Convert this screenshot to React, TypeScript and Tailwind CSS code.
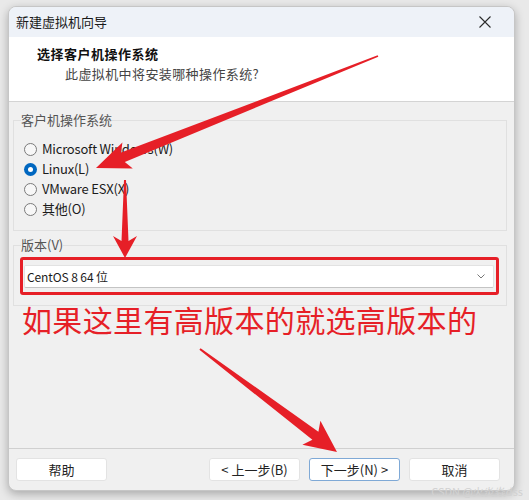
import React from 'react';

type Pt = [number, number];

// builds a tapered arrow polygon from tail to tip
function arrowPoints(s: Pt, t: Pt, headLen: number, headHalf: number, shaftEnd: number, shaftStart: number) {
  const dx = t[0] - s[0];
  const dy = t[1] - s[1];
  const len = Math.hypot(dx, dy);
  const ux = dx / len;
  const uy = dy / len;
  const px = -uy;
  const py = ux;
  const bx = t[0] - ux * headLen;
  const by = t[1] - uy * headLen;
  const jx = bx + ux * 5;
  const jy = by + uy * 5;
  const pts: Pt[] = [
    t,
    [bx + px * headHalf, by + py * headHalf],
    [jx + px * shaftEnd, jy + py * shaftEnd],
    [s[0] + px * shaftStart, s[1] + py * shaftStart],
    [s[0] - px * shaftStart, s[1] - py * shaftStart],
    [jx - px * shaftEnd, jy - py * shaftEnd],
    [bx - px * headHalf, by - py * headHalf],
  ];
  return pts.map(p => `${p[0].toFixed(1)},${p[1].toFixed(1)}`).join(' ');
}

function Radio({ label, checked }: { label: string; checked?: boolean }) {
  return (
    <div className="h-[20px] flex items-center">
      {checked ? (
        <span className="w-[13px] h-[13px] rounded-full bg-[#0067c0] flex items-center justify-center">
          <span className="w-[5px] h-[5px] rounded-full bg-white" />
        </span>
      ) : (
        <span className="w-[13px] h-[13px] rounded-full border border-[#7a7a7a] bg-[#f7f7f7]" />
      )}
      <span className="ml-[5px] text-[13px] tracking-[-0.2px] leading-[20px] text-[#1b1b1b]">{label}</span>
    </div>
  );
}

function Button({ children, primary }: { children: React.ReactNode; primary?: boolean }) {
  return (
    <button
      className={
        primary
          ? 'w-[91px] h-[23px] rounded-[3px] bg-white border border-[#7fa9d6] text-[13px] text-[#222] flex items-center justify-center'
          : 'w-[91px] h-[23px] rounded-[3px] bg-white border border-[#e3e3e3] text-[13px] text-[#222] flex items-center justify-center'
      }
    >
      {children}
    </button>
  );
}

export default function App() {
  const red = '#e61f27';
  return (
    <div className="relative w-[529px] h-[500px] overflow-hidden bg-[#e9e9e9] pt-[6px] pl-[8px] font-['Noto_Sans_CJK_SC',sans-serif]">
      <div className="w-[507px] h-[485px] rounded-[8px] border border-[#c6c6c6] bg-[#f0f0f0] shadow-[0_3px_10px_rgba(0,0,0,0.28)] overflow-hidden flex flex-col">
        {/* title bar */}
        <div className="h-[30px] shrink-0 bg-[#eef2f8] flex items-center justify-between pl-[7px] pr-[23px]">
          <span className="text-[13px] text-[#1a1a1a]">新建虚拟机向导</span>
          <svg width="12" height="12" viewBox="0 0 12 12">
            <path d="M0.5 0.5 L11.5 11.5 M11.5 0.5 L0.5 11.5" stroke="#2b2b2b" strokeWidth="1.1" />
          </svg>
        </div>

        {/* header */}
        <div className="h-[65px] shrink-0 bg-white border-b border-[#d4d4d4] pt-[7px] pl-[28px]">
          <div className="h-[20px] leading-[20px] text-[13px] font-bold text-[#111] tracking-[0.5px]">选择客户机操作系统</div>
          <div className="h-[20px] leading-[20px] text-[13px] text-[#444] ml-[28px] tracking-[0.4px]">此虚拟机中将安装哪种操作系统?</div>
        </div>

        {/* body */}
        <div className="flex-1 pt-[9px] pl-[4px] pr-[7px]">
          <fieldset className="border border-[#e0e0e0] pl-[7px] pt-[10px] pb-[11px]">
            <legend className="text-[13px] leading-[18px] text-[#555]">客户机操作系统</legend>
            <div className="ml-[3px]">
              <Radio label="Microsoft Windows(W)" />
              <Radio label="Linux(L)" checked />
              <Radio label="VMware ESX(X)" />
              <Radio label="其他(O)" />
            </div>
          </fieldset>

          <fieldset className="mt-[5px] border border-[#e0e0e0] pl-[7px] pr-[12px] pt-[11px] pb-[17px]">
            <legend className="text-[13px] leading-[18px] text-[#555]">版本(V)</legend>
            <div className="ml-[3px] h-[23px] bg-white border border-[#e2e2e2] border-b-[#c4c4c4] rounded-[2px] flex items-center justify-between pl-[2px] pr-[8px]">
              <span className="text-[12px] tracking-[-0.1px] text-[#1b1b1b]">CentOS 8 64 位</span>
              <svg width="8" height="5" viewBox="0 0 8 5">
                <path d="M0.5 0.5 L4 4 L7.5 0.5" fill="none" stroke="#777" strokeWidth="1" />
              </svg>
            </div>
          </fieldset>
        </div>

        {/* footer */}
        <div className="h-[42px] shrink-0 border-t border-[#d0d0d0] pt-[9px] pl-[7px] pr-[14px] flex items-start">
          <Button>帮助</Button>
          <div className="ml-auto flex gap-[9px]">
            <Button>&lt; 上一步(B)</Button>
            <Button primary>下一步(N) &gt;</Button>
            <Button>取消</Button>
          </div>
        </div>
      </div>

      {/* annotations */}
      <svg className="absolute left-0 top-0 pointer-events-none" width="529" height="500" viewBox="0 0 529 500">
        <rect x="21.5" y="258.5" width="476" height="35" rx="1.5" fill="none" stroke={red} strokeWidth="3" />
        <polygon points={arrowPoints([378, 56], [96, 168], 34, 14, 5, 0.8)} fill={red} />
        <polygon points={arrowPoints([125, 180], [125, 258], 22, 12, 3.5, 1)} fill={red} />
        <polygon points={arrowPoints([200, 349], [337, 452], 32, 15, 5, 1)} fill={red} />
      </svg>
      <div className="absolute left-[22px] top-[304px] text-[30px] leading-[30px] tracking-[0.35px] text-[#e61f27] whitespace-nowrap">
        如果这里有高版本的就选高版本的
      </div>
      <div className="absolute right-[6px] bottom-[2px] text-[11px] leading-[14px] text-[#d2d2d2]">CSDN @火炎焱dss</div>
    </div>
  );
}
